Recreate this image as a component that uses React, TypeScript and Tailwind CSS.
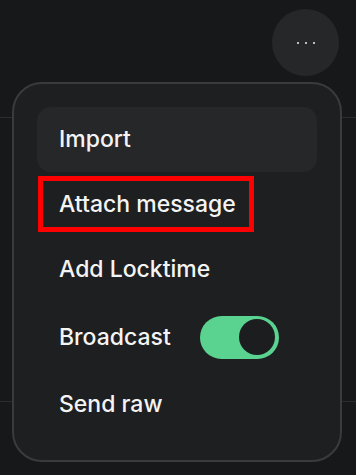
import React from "react";

function Item({ label, active }: { label: string; active?: boolean }) {
  return (
    <div
      className={`flex h-[65px] items-center rounded-[14px] pl-[22px] ${
        active ? "bg-[#262729]" : ""
      }`}
    >
      <span>{label}</span>
    </div>
  );
}

export default function App() {
  return (
    <div
      className="relative h-[475px] w-[356px] overflow-hidden bg-[#17181a] text-[#f4f4f4]"
      style={{ fontFamily: "Inter, 'Noto Sans', sans-serif" }}
    >
      {/* background rows */}
      <div className="pt-[117px]">
        <div className="h-px w-full bg-[#2c2d30]" />
        <div className="mt-[283px] h-px w-full bg-[#2c2d30]" />
      </div>

      {/* more button */}
      <button className="absolute left-[272px] top-[9px] flex h-[67px] w-[67px] items-center justify-center gap-[6px] rounded-full bg-[#262729]">
        <span className="h-[2px] w-[2px] rounded-full bg-[#f0f0f0]" />
        <span className="h-[2px] w-[2px] rounded-full bg-[#f0f0f0]" />
        <span className="h-[2px] w-[2px] rounded-full bg-[#f0f0f0]" />
      </button>

      {/* menu */}
      <div className="absolute left-[12px] top-[82px] w-[330px] rounded-[30px] border-2 border-[#3a3b3d] bg-[#1e1f21] px-[23px] pb-[23px] pt-[23px] text-[23px] font-medium leading-none">
        <Item label="Import" active />
        <Item label="Attach message" />
        <Item label="Add Locktime" />
        <div className="flex h-[70px] items-center pl-[22px]">
          <span>Broadcast</span>
          <div className="ml-[29px] flex h-[43px] w-[79px] items-center justify-end rounded-full bg-[#5bd390] pr-[4px]">
            <div className="h-[36px] w-[36px] rounded-full bg-[#1c1d1f]" />
          </div>
        </div>
        <Item label="Send raw" />
      </div>

      {/* annotation */}
      <div className="absolute left-[38px] top-[176px] h-[56px] w-[216px] border-[5px] border-[#ff0000]" />
    </div>
  );
}
